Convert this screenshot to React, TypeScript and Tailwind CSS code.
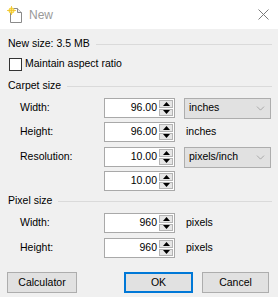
import { ChevronDown } from 'lucide-react';

const Spinner = ({ value }: { value: string }) => {
    return (
        <div className="w-[71px] h-[20px] flex bg-white border border-[#a9a9a9]">
            <div className="flex-1 flex items-center justify-end pr-[2px] text-black">{value}</div>
            <div className="w-[15px] flex flex-col gap-px pr-px py-px">
                <div className="flex-1 flex items-center justify-center bg-[#e6e6e6] border border-[#b4b4b4]">
                    <svg width="7" height="4" viewBox="0 0 7 4">
                        <path d="M3.5 0 L7 4 L0 4 Z" fill="#000" />
                    </svg>
                </div>
                <div className="flex-1 flex items-center justify-center bg-[#e6e6e6] border border-[#b4b4b4]">
                    <svg width="7" height="4" viewBox="0 0 7 4">
                        <path d="M0 0 L7 0 L3.5 4 Z" fill="#000" />
                    </svg>
                </div>
            </div>
        </div>
    );
};

const Select = ({ value }: { value: string }) => {
    return (
        <div className="ml-[9px] w-[87px] h-[21px] flex items-center justify-between pl-[4px] pr-[3px] bg-[#e1e1e1] border border-[#adadad] text-black">
            <span>{value}</span>
            <ChevronDown size={13} strokeWidth={1} color="#7a7a7a" />
        </div>
    );
};

const GroupHeader = ({ title, className }: { title: string; className: string }) => {
    return (
        <div className={`h-[14px] flex items-center ${className}`}>
            <span>{title}</span>
            <div className="flex-1 ml-[6px] mr-[6px] h-px bg-[#dadada]" />
        </div>
    );
};

const Row = ({ label, className, children }: { label: string; className: string; children: React.ReactNode }) => {
    return (
        <div className={`h-[20px] flex items-center ${className}`}>
            <div className="ml-[12px] w-[84px]">{label}</div>
            {children}
        </div>
    );
};

const Button = ({ label, className }: { label: string; className: string }) => {
    return (
        <div className={`h-[21px] flex items-center justify-center bg-[#e1e1e1] border text-black ${className}`}>
            {label}
        </div>
    );
};

export default function App() {
    return (
        <div
            className="w-[278px] h-[297px] bg-[#f0f0f0] text-[10.5px] text-black overflow-hidden"
            style={{ fontFamily: '"Liberation Sans", Arial, sans-serif' }}
        >
            <div className="h-[29px] bg-white flex items-center">
                <svg width="16" height="17" viewBox="0 0 16 17" className="ml-[7px]">
                    <path d="M3.5 2.5 H10.5 L14.5 6.5 V16.5 H3.5 Z" fill="#fff" stroke="#8a8a8a" />
                    <path d="M10.5 2.5 V6.5 H14.5" fill="#eee" stroke="#8a8a8a" />
                    <circle cx="4.5" cy="4.5" r="3" fill="#f6d54a" />
                    <circle cx="4.5" cy="4.5" r="1.6" fill="#fff3b0" />
                    <path d="M4.5 0 V9 M0 4.5 H9" stroke="#f0c020" strokeWidth="0.8" />
                </svg>
                <span className="ml-[6px] text-[12px] text-[#999999]">New</span>
                <svg width="11" height="11" viewBox="0 0 11 11" className="ml-auto mr-[9px]">
                    <path d="M0.5 0.5 L10.5 10.5 M10.5 0.5 L0.5 10.5" stroke="#7a7a7a" strokeWidth="1" />
                </svg>
            </div>

            <div className="pl-[8px]">
                <GroupHeader title="New size: 3.5 MB" className="mt-[8px]" />

                <div className="mt-[6px] h-[14px] flex items-center">
                    <div className="ml-[1px] w-[13px] h-[13px] bg-white border border-[#333333]" />
                    <span className="ml-[3px]">Maintain aspect ratio</span>
                </div>

                <GroupHeader title="Carpet size" className="mt-[8px]" />

                <Row label="Width:" className="mt-[5px]">
                    <Spinner value="96.00" />
                    <Select value="inches" />
                </Row>
                <Row label="Height:" className="mt-[4px]">
                    <Spinner value="96.00" />
                    <span className="ml-[11px]">inches</span>
                </Row>
                <Row label="Resolution:" className="mt-[5px]">
                    <Spinner value="10.00" />
                    <Select value="pixels/inch" />
                </Row>
                <Row label="" className="mt-[4px]">
                    <Spinner value="10.00" />
                </Row>

                <GroupHeader title="Pixel size" className="mt-[3px]" />

                <Row label="Width:" className="mt-[5px]">
                    <Spinner value="960" />
                    <span className="ml-[11px]">pixels</span>
                </Row>
                <Row label="Height:" className="mt-[5px]">
                    <Spinner value="960" />
                    <span className="ml-[11px]">pixels</span>
                </Row>

                <div className="mt-[14px] flex items-center">
                    <Button label="Calculator" className="-ml-[1px] w-[70px] border-[#adadad]" />
                    <Button label="OK" className="ml-[47px] w-[69px] border-2 border-[#0078d7]" />
                    <Button label="Cancel" className="ml-[9px] w-[67px] border-[#adadad]" />
                </div>
            </div>
        </div>
    );
}
